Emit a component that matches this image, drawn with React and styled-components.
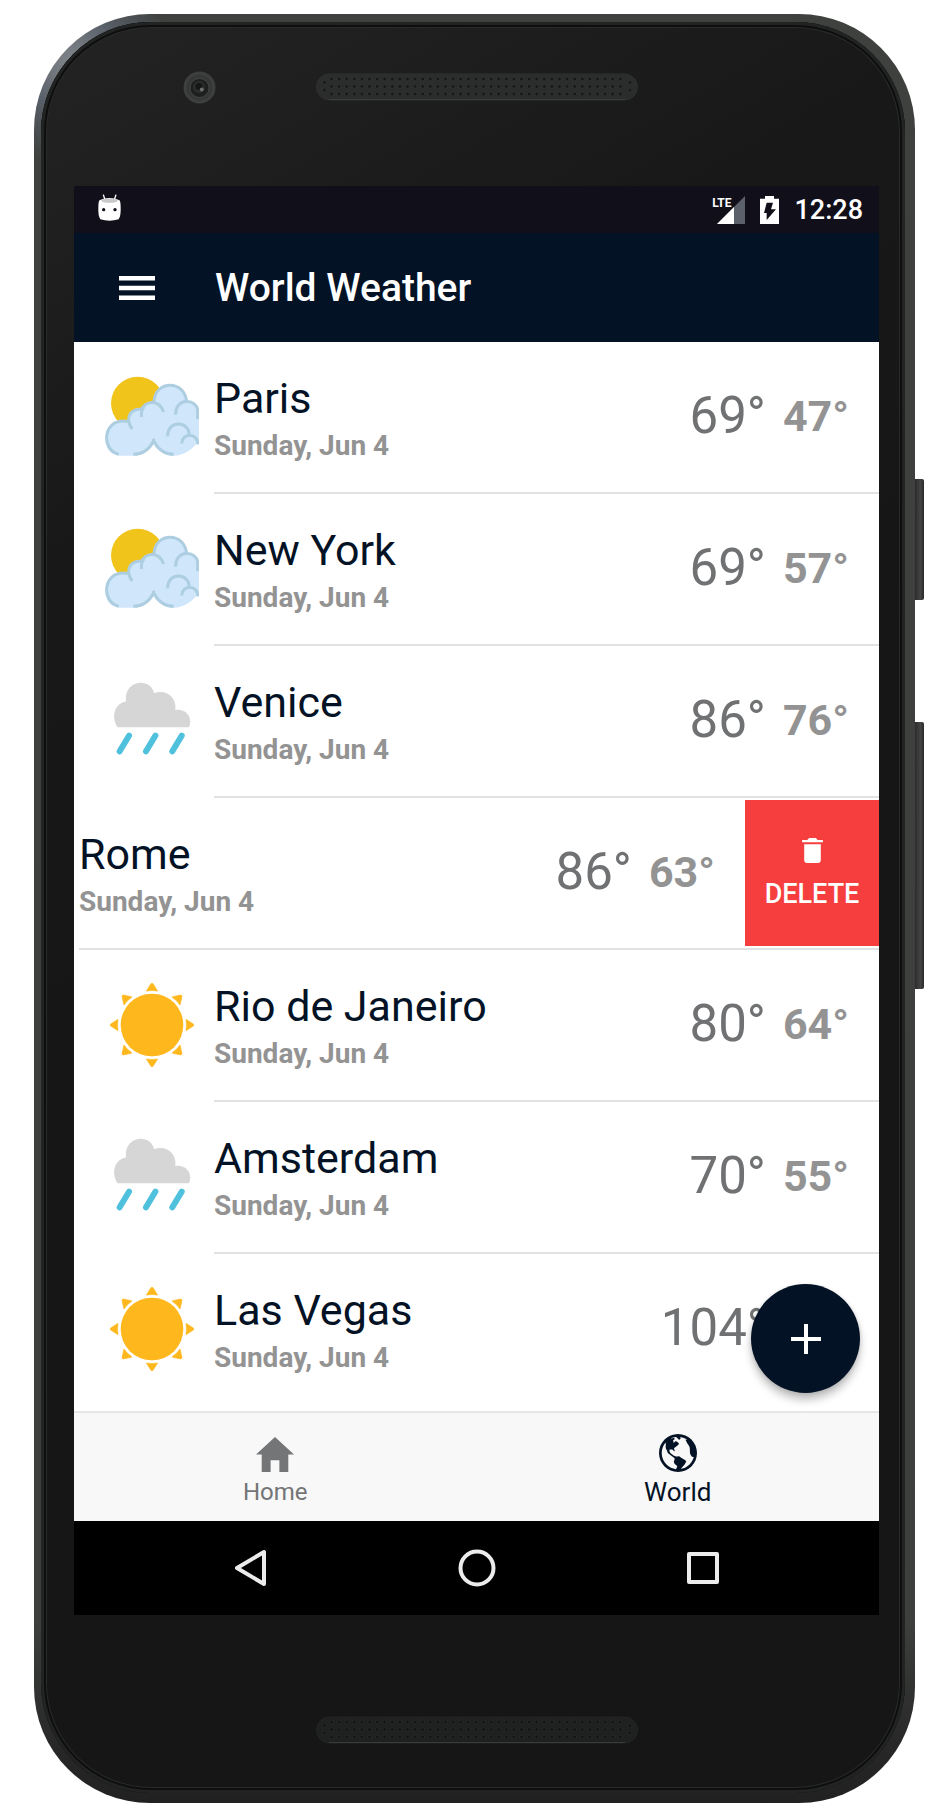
import React from "react";
import styled, { createGlobalStyle, css } from "styled-components";
import { IoMdGlobe, IoMdHome, IoMdTrash } from "react-icons/io";

const navy = "#041225";
const lineGrey = "#e2e2e2";

const GlobalStyle = createGlobalStyle`
  *, *::before, *::after { box-sizing: border-box; }
  body {
    margin: 0;
    background: #fff;
    font-family: Roboto, "Liberation Sans", sans-serif;
  }
  button { border: 0; padding: 0; margin: 0; background: none; font: inherit; cursor: pointer; }
  h1, h2, p, ul { margin: 0; padding: 0; font-weight: inherit; }
  svg { display: block; flex: none; }
`;

/* ---------- device ---------- */

const Page = styled.div`
  padding: 14px 37px 16px 34px;
`;

const Device = styled.div`
  position: relative;
  padding: 8px 10px 10px 7px;
  border-radius: 116px;
  background:
    radial-gradient(circle at 40px 50px, #85898e 0, rgba(90, 97, 107, 0.9) 50px, rgba(64, 66, 65, 0) 100px),
    linear-gradient(to bottom, #3f413f 0, #3d3f3d 90%, #262726 97%, #202120 100%);
`;

const DeviceFace = styled.div`
  padding: 0 26px 0 33px;
  border-radius: 110px;
  box-shadow: inset 0 0 0 3px #222323, inset 0 0 0 5px #0e0e0e, inset 0 0 0 6px #292a2a;
  background: linear-gradient(150deg, #232323 0, #1e1e1e 12%, #181818 24%, #161616 50%);
`;

const Forehead = styled.div`
  height: 164px;
  display: grid;
  grid-template-columns: 1fr auto 1fr;
  align-items: center;
  padding-bottom: 34px;
`;

const CameraSlot = styled.div`
  padding-left: 109px;
`;

const Chin = styled.div`
  height: 178px;
  padding-top: 101px;
  display: flex;
  justify-content: center;
`;

const SideButton = styled.span`
  position: absolute;
  left: 100%;
  top: ${(p) => p.$top}px;
  width: 9px;
  height: ${(p) => p.$length}px;
  border-radius: 0 2px 2px 0;
  background: linear-gradient(to right, #2b2c2b, #434443 60%, #2a2a29);
`;

const Screen = styled.div`
  display: flex;
  flex-direction: column;
  background: #fff;
`;

/* ---------- bars ---------- */

const StatusBar = styled.div`
  height: 47px;
  padding: 0 16px 0 24px;
  display: flex;
  align-items: center;
  background: #11101a;
  color: #fff;
`;

const StatusIcons = styled.div`
  margin-left: auto;
  display: flex;
  align-items: center;
  gap: 15px;
`;

const Network = styled.div`
  display: flex;
  align-items: flex-start;
`;

const NetworkType = styled.span`
  font-size: 12px;
  line-height: 14px;
  font-weight: 700;
  margin-right: -14px;
`;

const Clock = styled.time`
  font-size: 27px;
  line-height: 32px;
  font-weight: 500;
`;

const AppBar = styled.header`
  height: 109px;
  padding-left: 45px;
  display: flex;
  align-items: center;
  gap: 60px;
  background: ${navy};
  color: #fff;
`;

const MenuButton = styled.button`
  color: #fff;
`;

const Title = styled.h1`
  font-size: 39px;
  line-height: 48px;
  font-weight: 500;
`;

/* ---------- list ---------- */

const ListArea = styled.main`
  position: relative;
`;

const CityList = styled.ul`
  list-style: none;
  padding-bottom: 5px;
`;

const CityRow = styled.li`
  display: flex;
  height: 152px;
  padding-left: ${(p) => (p.$swiped ? 5 : 31)}px;
`;

const WeatherIcon = styled.div`
  flex: none;
  display: flex;
  align-items: center;
  padding-bottom: 2px;
  margin-right: 15px;
`;

const RowBody = styled.div`
  flex: 1;
  min-width: 0;
  display: flex;
  border-bottom: 2px solid ${(p) => (p.$last ? "transparent" : lineGrey)};
`;

const CityText = styled.div`
  flex: 1;
  min-width: 0;
  display: flex;
  flex-direction: column;
  gap: 6px;
  padding-top: 30px;
`;

const CityName = styled.h2`
  font-size: 43px;
  line-height: 52px;
  font-weight: 400;
  color: ${navy};
  white-space: nowrap;
`;

const CityDate = styled.p`
  font-size: 28px;
  line-height: 32px;
  font-weight: 700;
  color: #939393;
  white-space: nowrap;
`;

const Temperatures = styled.div`
  display: flex;
  align-items: center;
  gap: 17px;
  padding: 0 30px 2px 0;
`;

const High = styled.span`
  font-size: 51px;
  line-height: 60px;
  font-weight: 400;
  color: #707173;
`;

const Low = styled.span`
  font-size: 43px;
  line-height: 52px;
  font-weight: 700;
  color: #939393;
`;

const DeleteButton = styled.button`
  flex: none;
  width: 134px;
  margin: 2px 0;
  display: flex;
  flex-direction: column;
  align-items: center;
  justify-content: center;
  gap: 14px;
  background: #f63e3e;
  color: #fff;
  font-size: 27px;
  line-height: 32px;
  font-weight: 500;
`;

const AddButton = styled.button`
  position: absolute;
  right: 19px;
  bottom: 18px;
  width: 109px;
  height: 109px;
  border-radius: 50%;
  display: flex;
  align-items: center;
  justify-content: center;
  background: ${navy};
  color: #fff;
  box-shadow: 0 7px 9px rgba(0, 0, 0, 0.24), 0 1px 4px rgba(0, 0, 0, 0.12);
`;

/* ---------- bottom ---------- */

const TabBar = styled.nav`
  display: flex;
  height: 110px;
  border-top: 2px solid #e6e6e6;
  background: #f8f8f8;
`;

const Tab = styled.button`
  flex: 1;
  display: flex;
  flex-direction: column;
  align-items: center;
  justify-content: flex-end;
  gap: 4px;
  padding-bottom: 13px;
  line-height: 32px;
  font-size: 24px;
  color: #747577;
  ${(p) =>
    p.$active &&
    css`
      font-size: 26px;
      color: ${navy};
    `}
`;

const SystemBar = styled.div`
  height: 94px;
  padding: 0 155px;
  display: flex;
  align-items: center;
  justify-content: space-between;
  background: #000;
`;

const SystemButton = styled.button`
  color: #ececec;
`;

/* ---------- drawings ---------- */

function Grille({ dim }) {
  const dots = [];
  for (let i = 0; i < 41; i += 1) {
    const x = 15.5 + i * 7.6;
    if (x > 310) break;
    [6, 13.5, 21].forEach((y) => dots.push([x, y]));
  }
  dots.push([8.5, 9.5], [8.5, 17], [314, 9.5], [314, 17]);
  return (
    <svg width="322" height="28" viewBox="0 0 322 28" aria-hidden="true">
      <rect x="0.5" y="1" width="321" height="26" rx="13" fill={dim ? "#1f2020" : "#2b2d2d"} stroke={dim ? "#242525" : "#2f3030"} />
      <path d="M13 26.5H309" stroke={dim ? "#3a3a3a" : "#3a3c3c"} />
      {dots.map(([x, y]) => (
        <circle key={`${x}-${y}`} cx={x} cy={y} r="1.9" fill={dim ? "#141414" : "#161717"} stroke={dim ? "#2b2c2c" : "#363838"} strokeWidth="0.7" />
      ))}
    </svg>
  );
}

const Camera = () => (
  <svg width="33" height="33" viewBox="0 0 33 33" aria-hidden="true">
    <circle cx="16.5" cy="16.5" r="16" fill="#3e3f3f" />
    <circle cx="16.5" cy="16.5" r="13" fill="#363838" />
    <circle cx="16.5" cy="17" r="9.5" fill="#1d1e1e" stroke="#494b4b" strokeWidth="0.8" />
    <circle cx="16" cy="16" r="6" fill="#2b2d2d" />
    <circle cx="16" cy="15.5" r="3.5" fill="#151616" />
    <circle cx="18.8" cy="18.5" r="2" fill="#6c6f70" />
  </svg>
);

const DroidFace = () => (
  <svg width="23" height="31" viewBox="0 0 69 93" aria-hidden="true">
    <path d="M16 2l5 16M54 2l-5 16" stroke="#fff" strokeWidth="4" />
    <path d="M6 18Q34 6 63 18Q68 19 68 40Q69 66 62 76Q34 84 7 76Q0 66 1 40Q1 19 6 18Z" fill="#fff" />
    <ellipse cx="34.5" cy="20" rx="25" ry="6.5" fill="#c9c9cb" />
    <circle cx="17" cy="47" r="5" fill="#11101a" />
    <circle cx="51" cy="47" r="5" fill="#11101a" />
  </svg>
);

const Signal = () => (
  <svg width="28" height="28" viewBox="0 0 28 28" aria-hidden="true">
    <path d="M28 0V28H0Z" fill="#5b606b" />
    <path d="M17 11V28H0Z" fill="#fff" />
  </svg>
);

const Battery = () => (
  <svg width="19" height="28" viewBox="0 0 57 84" aria-hidden="true">
    <path d="M15 0H42V8H57V84H0V8H15Z" fill="#fff" />
    <path d="M20 20H39L33 40H48L20 72V51H12Z" fill="#11101a" />
  </svg>
);

const MenuIcon = () => (
  <svg width="36" height="24" viewBox="0 0 36 24" fill="currentColor" aria-hidden="true">
    <path d="M0 0H36V4.5H0ZM0 9.75H36V14.25H0ZM0 19.5H36V24H0Z" />
  </svg>
);

const PlusIcon = () => (
  <svg width="30" height="30" viewBox="0 0 30 30" fill="currentColor" aria-hidden="true">
    <path d="M13 0H17V13H30V17H17V30H13V17H0V13H13Z" />
  </svg>
);

const PartlyCloudy = () => (
  <svg width="94" height="94" viewBox="135 90 282 282" role="img" aria-label="Partly cloudy">
    <circle cx="233" cy="190" r="80" fill="#f1c41b" />
    <path
      d="M178 347C118 343 122 244 190 242L204 243C201 212 224 203 246 204C252 192 266 184 282 183C286 120 374 112 380 183C402 182 420 196 420 222L420 290C412 320 372 348 340 347C312 345 294 326 281 302C264 330 244 347 222 347Z"
      fill="#d0e7fb"
    />
    <g fill="none" stroke="#adcde0" strokeWidth="9">
      <path d="M176 343C124 330 128 243 190 243Q198 243 206 245M217 267Q207 256 206 240C206 216 224 206 248 207Q242 218 245 231" />
      <path d="M246 207C254 187 294 172 311 216M282 184C286 120 374 118 380 186M347 224C344 172 414 174 413 215V238" />
      <path d="M220 343C246 343 268 328 281 303C294 328 314 343 341 343M281 296V308" />
      <path d="M323 289C322 240 386 240 388 286M365 311C366 278 412 276 414 313" />
    </g>
  </svg>
);

const Rain = () => (
  <svg width="94" height="94" viewBox="135 102 282 282" role="img" aria-label="Rain">
    <path
      d="M173 262C154 236 160 192 198 184C191 118 274 112 282 160C316 146 352 172 346 210C378 204 400 234 387 262Z"
      fill="#d6d6d6"
    />
    <path d="M207 287L179 334M286 287L258 334M365 287L337 334" stroke="#4fc1dc" strokeWidth="18" strokeLinecap="round" />
  </svg>
);

const Sun = () => (
  <svg width="94" height="94" viewBox="135 84 282 282" role="img" aria-label="Sunny" fill="#feb81d">
    <circle cx="276" cy="225" r="94" />
    {[0, 45, 90, 135, 180, 225, 270, 315].map((a) => (
      <path
        key={a}
        transform={`rotate(${a} 276 225)`}
        d="M273 101Q276 98 279 101L293 123Q276 120 259 123Z"
        stroke="#feb81d"
        strokeWidth="2"
        strokeLinejoin="round"
      />
    ))}
  </svg>
);

const icons = { cloud: PartlyCloudy, rain: Rain, sun: Sun };

const cities = [
  { name: "Paris", high: 69, low: 47, icon: "cloud" },
  { name: "New York", high: 69, low: 57, icon: "cloud" },
  { name: "Venice", high: 86, low: 76, icon: "rain" },
  { name: "Rome", high: 86, low: 63, icon: "sun", swiped: true },
  { name: "Rio de Janeiro", high: 80, low: 64, icon: "sun" },
  { name: "Amsterdam", high: 70, low: 55, icon: "rain" },
  { name: "Las Vegas", high: 104, low: 77, icon: "sun" },
];

function City({ city, last }) {
  const Icon = icons[city.icon];
  return (
    <CityRow $swiped={city.swiped}>
      {!city.swiped && (
        <WeatherIcon>
          <Icon />
        </WeatherIcon>
      )}
      <RowBody $last={last}>
        <CityText>
          <CityName>{city.name}</CityName>
          <CityDate>Sunday, Jun 4</CityDate>
        </CityText>
        <Temperatures>
          <High>{city.high}°</High>
          <Low>{city.low}°</Low>
        </Temperatures>
        {city.swiped && (
          <DeleteButton type="button">
            <IoMdTrash viewBox="96 48 320 416" size={27} />
            DELETE
          </DeleteButton>
        )}
      </RowBody>
    </CityRow>
  );
}

export default function App() {
  return (
    <Page>
      <GlobalStyle />
      <Device>
        <SideButton $top={465} $length={121} />
        <SideButton $top={708} $length={267} />
        <DeviceFace>
          <Forehead>
            <CameraSlot>
              <Camera />
            </CameraSlot>
            <Grille />
          </Forehead>
          <Screen>
            <StatusBar>
              <DroidFace />
              <StatusIcons>
                <Network>
                  <NetworkType>LTE</NetworkType>
                  <Signal />
                </Network>
                <Battery />
                <Clock>12:28</Clock>
              </StatusIcons>
            </StatusBar>
            <AppBar>
              <MenuButton type="button" aria-label="Menu">
                <MenuIcon />
              </MenuButton>
              <Title>World Weather</Title>
            </AppBar>
            <ListArea>
              <CityList>
                {cities.map((city, i) => (
                  <City key={city.name} city={city} last={i === cities.length - 1} />
                ))}
              </CityList>
              <AddButton type="button" aria-label="Add city">
                <PlusIcon />
              </AddButton>
            </ListArea>
            <TabBar>
              <Tab type="button">
                <IoMdHome viewBox="48 32 416 416" size={38} />
                Home
              </Tab>
              <Tab type="button" $active aria-current="page">
                <IoMdGlobe viewBox="48 48 416 416" size={38} />
                World
              </Tab>
            </TabBar>
            <SystemBar>
              <SystemButton type="button" aria-label="Back">
                <svg width="42" height="38" viewBox="0 0 42 38" fill="none" stroke="currentColor" strokeWidth="4" strokeLinejoin="round">
                  <path d="M35 3V35L8 19Z" />
                </svg>
              </SystemButton>
              <SystemButton type="button" aria-label="Home">
                <svg width="42" height="38" viewBox="0 0 42 38" fill="none" stroke="currentColor" strokeWidth="4">
                  <circle cx="21" cy="19" r="16.5" />
                </svg>
              </SystemButton>
              <SystemButton type="button" aria-label="Recent apps">
                <svg width="42" height="38" viewBox="0 0 42 38" fill="none" stroke="currentColor" strokeWidth="4" strokeLinejoin="round">
                  <rect x="7" y="5" width="28" height="28" />
                </svg>
              </SystemButton>
            </SystemBar>
          </Screen>
          <Chin>
            <Grille dim />
          </Chin>
        </DeviceFace>
      </Device>
    </Page>
  );
}
